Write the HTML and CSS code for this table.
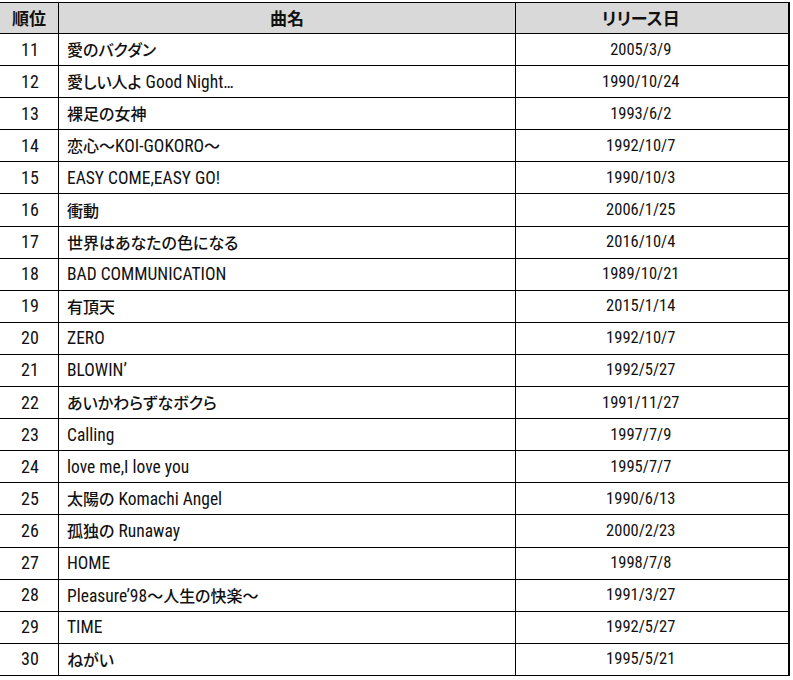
FILE: index.html
```html
<!DOCTYPE html>
<html lang="ja">
<head>
<meta charset="utf-8">
<title>ランキング</title>
<link rel="stylesheet" href="styles.css">
</head>
<body>
<table class="rank">
  <colgroup>
    <col class="c-rank">
    <col class="c-title">
    <col class="c-date">
  </colgroup>
  <thead>
    <tr><th>順位</th><th>曲名</th><th class="date">リリース日</th></tr>
  </thead>
  <tbody>
    <tr><td class="num">11</td><td class="title"><span class="ja">愛のバクダン</span></td><td class="date">2005/3/9</td></tr>
    <tr><td class="num">12</td><td class="title"><span class="ja">愛しい人よ</span> Good Night…</td><td class="date">1990/10/24</td></tr>
    <tr><td class="num">13</td><td class="title"><span class="ja">裸足の女神</span></td><td class="date">1993/6/2</td></tr>
    <tr><td class="num">14</td><td class="title"><span class="ja">恋心～</span>KOI-GOKORO<span class="ja">～</span></td><td class="date">1992/10/7</td></tr>
    <tr><td class="num">15</td><td class="title">EASY COME,EASY GO!</td><td class="date">1990/10/3</td></tr>
    <tr><td class="num">16</td><td class="title"><span class="ja">衝動</span></td><td class="date">2006/1/25</td></tr>
    <tr><td class="num">17</td><td class="title"><span class="ja">世界はあなたの色になる</span></td><td class="date">2016/10/4</td></tr>
    <tr><td class="num">18</td><td class="title">BAD COMMUNICATION</td><td class="date">1989/10/21</td></tr>
    <tr><td class="num">19</td><td class="title"><span class="ja">有頂天</span></td><td class="date">2015/1/14</td></tr>
    <tr><td class="num">20</td><td class="title">ZERO</td><td class="date">1992/10/7</td></tr>
    <tr><td class="num">21</td><td class="title">BLOWIN’</td><td class="date">1992/5/27</td></tr>
    <tr><td class="num">22</td><td class="title"><span class="ja">あいかわらずなボクら</span></td><td class="date">1991/11/27</td></tr>
    <tr><td class="num">23</td><td class="title">Calling</td><td class="date">1997/7/9</td></tr>
    <tr><td class="num">24</td><td class="title">love me,I love you</td><td class="date">1995/7/7</td></tr>
    <tr><td class="num">25</td><td class="title"><span class="ja">太陽の</span> Komachi Angel</td><td class="date">1990/6/13</td></tr>
    <tr><td class="num">26</td><td class="title"><span class="ja">孤独の</span> Runaway</td><td class="date">2000/2/23</td></tr>
    <tr><td class="num">27</td><td class="title">HOME</td><td class="date">1998/7/8</td></tr>
    <tr><td class="num">28</td><td class="title">Pleasure’98<span class="ja">～人生の快楽～</span></td><td class="date">1991/3/27</td></tr>
    <tr><td class="num">29</td><td class="title">TIME</td><td class="date">1992/5/27</td></tr>
    <tr><td class="num">30</td><td class="title"><span class="ja">ねがい</span></td><td class="date">1995/5/21</td></tr>
  </tbody>
</table>
</body>
</html>
```

FILE: styles.css
```css
html, body {
  margin: 0;
  padding: 0;
  background: #ffffff;
}

body {
  padding-top: 2px;
  font-family: "Roboto Condensed", "Noto Sans CJK JP", sans-serif;
  font-size: 17px;
  font-weight: 400;
  color: #111111;
  font-feature-settings: "palt";
}

.rank {
  border-collapse: collapse;
  width: 789px;
  margin-left: -1px;
  table-layout: fixed;
}

.c-rank { width: 59px; }
.c-title { width: 457px; }
.c-date { width: 273px; }

.rank th,
.rank td {
  border: 1px solid #000000;
  height: 31.1px;
  padding: 0;
  line-height: 20px;
  white-space: nowrap;
}

.rank th {
  background: #d9d9d9;
  font-family: "Noto Sans CJK JP", sans-serif;
  font-size: 17px;
  font-weight: 700;
  text-align: center;
  height: 30px;
}

.rank td.num {
  text-align: center;
  font-size: 18px;
  padding-left: 2px;
}

.rank td.title {
  text-align: left;
  padding-left: 8px;
  font-size: 17.5px;
}

.ja {
  font-family: "Noto Sans CJK JP", sans-serif;
  font-size: 16px;
  font-weight: 500;
}

.rank td.date,
.rank th.date {
  text-align: center;
  padding-right: 22px;
}

.rank td.date {
  font-size: 16.5px;
}

.rank tr > :last-child {
  border-right-width: 2px;
}
```
